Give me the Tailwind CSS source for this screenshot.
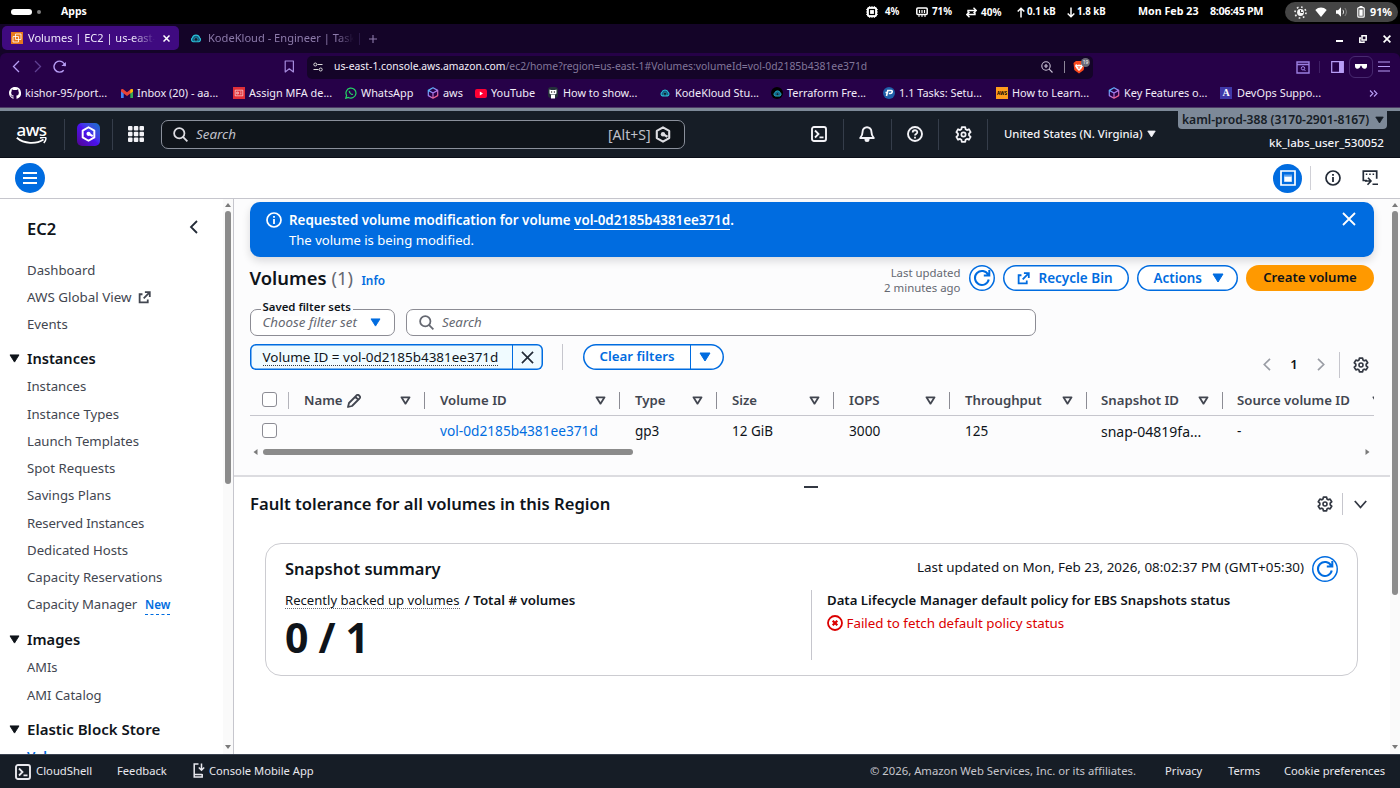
<!DOCTYPE html>
<html lang="en">
<head>
<meta charset="utf-8">
<title>Volumes | EC2 | us-east-1</title>
<script src="https://cdn.jsdelivr.net/npm/@tailwindcss/browser@4"></script>
</head>
<body class="w-[1400px] h-[788px] overflow-hidden flex flex-col font-['Noto_Sans',sans-serif] whitespace-nowrap bg-white text-[#0f141a]">

<svg class="absolute w-0 h-0">
  <symbol id="gear" viewBox="0 0 16 16"><path d="M6.400 1.100h3.200l.4 2 1.200.7 1.900-.7 1.600 2.700-1.500 1.400v1.600l1.500 1.400-1.600 2.700-1.900-.7-1.200.7-.4 2H6.400l-.4-2-1.200-.7-1.900.7-1.600-2.700 1.500-1.400V7.200L1.300 5.800l1.600-2.700 1.900.7 1.200-.7z" fill="none" stroke="currentColor" stroke-width="1.700" stroke-linejoin="round"/><circle cx="8" cy="8" r="2" fill="none" stroke="currentColor" stroke-width="1.600"/></symbol>
  <symbol id="search" viewBox="0 0 16 16"><circle cx="6.700" cy="6.700" r="5.500" fill="none" stroke="currentColor" stroke-width="1.900"/><path d="M10.600 10.600 15.300 15.300" stroke="currentColor" stroke-width="1.900"/></symbol>
  <symbol id="refresh" viewBox="0 0 16 16"><path d="M14 9.300A6.200 6.200 0 1 1 13.400 5M14.500 .8V5.700H9.600" fill="none" stroke="currentColor" stroke-width="1.800"/></symbol>
  <symbol id="ext" viewBox="0 0 16 16"><path d="M5.500 4H2v10h10v-3.500M8.500 1.500h6V7.500M14.500 1.500 7 9" fill="none" stroke="currentColor" stroke-width="2.200"/></symbol>
  <symbol id="info" viewBox="0 0 16 16"><circle cx="8" cy="8" r="7" fill="none" stroke="currentColor" stroke-width="1.700"/><path d="M8 7v5M8 4v1.800" stroke="currentColor" stroke-width="1.800"/></symbol>
  <symbol id="down" viewBox="0 0 12 10"><path d="M1 1h10L6 9z" fill="currentColor" stroke="currentColor" stroke-width="1" stroke-linejoin="round"/></symbol>
  <symbol id="sort" viewBox="0 0 12 10"><path d="M1.500 1.500h9L6 8.500z" fill="none" stroke="currentColor" stroke-width="2" stroke-linejoin="round"/></symbol>
  <symbol id="x" viewBox="0 0 14 14"><path d="M1 1l12 12M13 1 1 13" fill="none" stroke="currentColor" stroke-width="1.800"/></symbol>
  <symbol id="shell" viewBox="0 0 16 16"><rect x="1" y="1" width="14" height="14" rx="2" fill="none" stroke="currentColor" stroke-width="1.900"/><path d="M4 4.500 7.500 8 4 11.500M8.500 11.300h4" fill="none" stroke="currentColor" stroke-width="1.800"/></symbol>
  <symbol id="kk" viewBox="0 0 12 10"><path d="M2.800 8.600A2.500 2.500 0 0 1 2 4.200 4.200 4.200 0 0 1 10 4.200a2.500 2.500 0 0 1-.8 4.400z" fill="#0e5f86" stroke="#2bc4d8" stroke-width="1.300"/><circle cx="6" cy="6" r="2" fill="#10202c" stroke="#2a93b0" stroke-width=".8"/></symbol>
  <symbol id="cube" viewBox="0 0 12 12"><path d="M6 .8 10.700 3.400V8.600L6 11.200 1.300 8.600V3.400zM1.300 3.400 6 6l4.700-2.600M6 6v5" fill="none" stroke="url(#cg)" stroke-width="1.200" stroke-linejoin="round"/></symbol>
  <linearGradient id="cg" gradientUnits="userSpaceOnUse" x1="1" y1="0" x2="10" y2="12"><stop offset="0.100" stop-color="#3cc6f5"/><stop offset=".5" stop-color="#a07cf5"/><stop offset=".9" stop-color="#ff5a7a"/></linearGradient>
  <symbol id="hex" viewBox="0 0 16 17"><path d="M8 1.300 14.200 4.900V12.100L8 15.700 1.800 12.100V4.900z" fill="none" stroke="currentColor" stroke-width="2.100" stroke-linejoin="round"/><circle cx="8" cy="8.300" r="2.200" fill="currentColor"/><path d="M8.500 8.500l4 2.300" stroke="currentColor" stroke-width="2.200"/></symbol>
</svg>

<!-- System bar -->
<div class="h-[24px] shrink-0 bg-black text-white flex items-center text-[10.5px] font-bold">
  <div class="ml-[11px] w-[21px] h-[6px] rounded-full bg-white"></div>
  <div class="ml-[5px] w-[4px] h-[4px] rounded-full bg-[#808080]"></div>
  <div class="ml-[20px] w-[805px] text-[10.500px]">Apps</div>
  <svg class="w-[12px] h-[12px] shrink-0" viewBox="0 0 12 12"><rect x=".8" y=".8" width="10.400" height="10.400" rx="3" fill="#fff"/><path d="M3.500 0v12M6 0v12M8.500 0v12M0 3.500h12M0 6h12M0 8.500h12" stroke="#fff" stroke-width=".7"/><rect x="3.500" y="3.500" width="5" height="5" fill="none" stroke="#000" stroke-width="1.200"/></svg>
  <div class="ml-[7px] w-[31px] text-[9.800px]">4%</div>
  <svg class="w-[12px] h-[10px] shrink-0" viewBox="0 0 12 10"><rect x=".8" y="1" width="10.400" height="6.500" rx="1" fill="none" stroke="#fff" stroke-width="1.500"/><path d="M3.500 3v3M6 3v3M8.500 3v3M2 9h2M5 9h2M8 9h2" stroke="#fff" stroke-width="1.200"/></svg>
  <div class="ml-[4px] w-[34px] text-[9.800px]">71%</div>
  <svg class="w-[11px] h-[11px] shrink-0" viewBox="0 0 11 11"><path d="M2 5.500V3.500h8M7.500.8 10.300 3.500 7.500 6M9 5.500v2H1M3.500 5 .8 7.500 3.500 10.200" fill="none" stroke="#fff" stroke-width="1.400"/></svg>
  <div class="ml-[4px] w-[36px] text-[10px]">40%</div>
  <svg class="w-[8px] h-[11px] shrink-0" viewBox="0 0 8 11"><path d="M4 10.500V1.500M.7 4.500 4 1.200 7.300 4.500" fill="none" stroke="#fff" stroke-width="1.500"/></svg>
  <div class="ml-[2px] w-[40px] text-[9.700px]">0.1 kB</div>
  <svg class="w-[8px] h-[11px] shrink-0" viewBox="0 0 8 11"><path d="M4 .5V9.500M.7 6.500 4 9.800 7.300 6.500" fill="none" stroke="#fff" stroke-width="1.500"/></svg>
  <div class="ml-[2px] w-[61px] text-[9.700px]">1.8 kB</div>
  <div class="w-[72px] text-[10.700px] -mt-px">Mon Feb 23</div>
  <div class="w-[75px] text-[10.800px] tracking-[-0.350px] -mt-px">8:06:45 PM</div>
  <div class="w-[113px] h-[20px] rounded-full bg-[#454545] flex items-center shrink-0">
    <svg class="ml-[9px] w-[13px] h-[13px]" viewBox="0 0 13 13"><circle cx="6.500" cy="6.500" r="5.500" fill="none" stroke="#eee" stroke-width="1.600" stroke-dasharray="1.700 2.600"/><circle cx="6.500" cy="6.500" r="3.400" fill="#f5f5f5"/><path d="M6.500 4v2.500h2.500" stroke="#454545" fill="none"/></svg>
    <svg class="ml-[8px] w-[12px] h-[10px]" viewBox="0 0 12 10"><path d="M6 10 .3 3C3.500-.3 8.500-.3 11.700 3z" fill="#fff"/></svg>
    <svg class="ml-[9px] w-[12px] h-[10px]" viewBox="0 0 12 10"><path d="M0 3.200h2L5 .3v9.400L2 6.800H0z" fill="#fff"/><path d="M6.800 2.800c1 1.300 1 3.100 0 4.400" stroke="#ddd" fill="none"/><path d="M8.800 1c2 2.400 2 5.600 0 8" stroke="#888" fill="none"/></svg>
    <svg class="ml-[9px] w-[8px] h-[12px]" viewBox="0 0 8 12"><path d="M2.500 0h3v2h-3z" fill="#fff"/><rect x=".8" y="1.600" width="6.400" height="9.600" rx="1" fill="none" stroke="#fff" stroke-width="1.200"/><path d="M2.300 3.500h3.400v6.300H2.300z" fill="#fff"/></svg>
    <div class="ml-[5px] text-[10.800px]">91%</div>
  </div>
</div>

<!-- Tab strip -->
<div class="h-[29px] shrink-0 bg-[#140428] flex items-center text-[11.700px]">
  <div class="ml-[2px] mr-[11px] -mt-[1px] w-[177px] h-[24px] rounded-[5px] bg-[#3f0a80] flex items-center text-[#eee8fa]">
    <svg class="ml-[9px] w-[12px] h-[12px] shrink-0" viewBox="0 0 12 12"><path d="M0 0h12v12H0z" fill="#e8791c"/><path d="M4.500 2h5.500v5.500H4.500zM7.500 4.500V10H2V4.500z" fill="none" stroke="#fff" stroke-width=".8"/></svg>
    <div class="ml-[5px] w-[127px] text-[11px] mask-r-from-82% mask-r-to-100%">Volumes | EC2 | us-east-</div>
    <svg class="ml-[8px] w-[7px] h-[7px]" viewBox="0 0 14 14"><path d="M1 1l12 12M13 1 1 13" stroke="#fff" stroke-width="3"/></svg>
  </div>
  <svg class="w-[12px] h-[9px]"><use href="#kk"/></svg>
  <div class="ml-[6px] w-[146px] text-[#8d7bab] text-[11.100px] mask-r-from-88% mask-r-to-100%">KodeKloud - Engineer | Task</div>
  <div class="ml-[5px] w-px h-[12px] bg-[#2a1846]"></div>
  <svg class="ml-[9px] w-[8px] h-[8px]" viewBox="0 0 8 8"><path d="M4 0v8M0 4h8" stroke="#8d7bab" stroke-width="1.100"/></svg>
  <div class="grow"></div>
  <div class="w-[7px] h-[2px] bg-white mt-[5px] mr-[16px]"></div>
  <svg class="w-[8px] h-[8px] mr-[16px]" viewBox="0 0 8 8"><path d="M3 .8h4.200V5H3z" fill="none" stroke="#fff" stroke-width="1.500"/><path d="M2 3H.8v4.200H5V6.200" fill="none" stroke="#fff" stroke-width="1.500"/></svg>
  <svg class="w-[8px] h-[8px] mr-[9px]" viewBox="0 0 14 14"><path d="M1 1l12 12M13 1 1 13" stroke="#fff" stroke-width="3"/></svg>
</div>

<!-- Toolbar -->
<div class="h-[27px] shrink-0 bg-[#140428]"><div class="h-full rounded-t-[6px] bg-[#260148] flex items-center text-[#b79df5]">
  <svg class="ml-[12px] w-[8px] h-[13px]" viewBox="0 0 8 13"><path d="M7 1 1.500 6.500 7 12" fill="none" stroke="currentColor" stroke-width="1.300"/></svg>
  <svg class="ml-[14px] w-[8px] h-[13px] text-[#5f4192]" viewBox="0 0 8 13"><path d="M1 1 6.500 6.500 1 12" fill="none" stroke="currentColor" stroke-width="1.300"/></svg>
  <svg class="ml-[11px] w-[13px] h-[13px]" viewBox="0 0 13 13"><path d="M10.700 10.200A5.500 5.500 0 1 1 12 6.200" fill="none" stroke="currentColor" stroke-width="1.400"/><path d="M8.400 6h4.500V2z" fill="currentColor"/></svg>
  <svg class="ml-[218px] w-[11px] h-[13px]" viewBox="0 0 11 13"><path d="M1.200 1h8.200v11L5.300 8.800 1.200 12z" fill="none" stroke="#a58bdc" stroke-width="1.200" stroke-linejoin="round"/></svg>
  <div class="ml-[12px] w-[786px] h-[23px] mt-[1px] rounded-[5px] bg-[#140428] flex items-center shrink-0">
    <svg class="ml-[6px] w-[10px] h-[10px]" viewBox="0 0 10 10"><path d="M4.500 2.500H9.500M.5 7.500h5" stroke="#ddd" stroke-width="1.200"/><circle cx="2.300" cy="2.500" r="1.500" fill="none" stroke="#ddd"/><circle cx="7.700" cy="7.500" r="1.500" fill="none" stroke="#ddd"/></svg>
    <div class="ml-[11px] w-[707px] text-[10.360px] text-[#82779a]"><span class="text-[#f4f0fa]">us-east-1.console.aws.amazon.com</span>/ec2/home?region=us-east-1#Volumes:volumeId=vol-0d2185b4381ee371d</div>
    <svg class="w-[12px] h-[12px]" viewBox="0 0 12 12"><circle cx="5" cy="5" r="4.200" fill="none" stroke="#c8c0d4" stroke-width="1.100"/><path d="M8.200 8.200 11.500 11.500M3 5h4M5 3v4" stroke="#c8c0d4" stroke-width="1.200"/></svg>
    <div class="ml-[11px] w-px h-[12px] bg-[#8d8698]"></div>
    <div class="relative ml-[8px]">
      <svg class="w-[12px] h-[14px]" viewBox="0 0 12 14"><path d="M3 1h6l2.500 2-.8 7L6 13.500 1.300 10 .5 3z" fill="#fb4a1e"/><path d="M3 4l1.500 1L6 4.500 7.500 5 9 4l1 2-1.500 2.500L6 11 3.500 8.500 2 6z" fill="#fff"/><path d="M6 6v3M4.500 6.500l1 .5M7.500 6.500l-1 .5" stroke="#fb4a1e" stroke-width=".8"/></svg>
      <div class="absolute left-[8px] -top-[2px] w-[9px] h-[9px] rounded-full bg-[#6b6b78] text-white text-[5px] leading-[9px] text-center">19</div>
    </div>
  </div>
  <svg class="ml-[203px] w-[14px] h-[13px] mt-px" viewBox="0 0 14 13"><path d="M1 1h12v11H1zM1 3.500h12" fill="none" stroke="#9b7fe0" stroke-width="1.400"/><circle cx="7" cy="7.300" r="1.700" fill="none" stroke="#9b7fe0"/><path d="M8 8.500 9.500 10" stroke="#9b7fe0"/></svg>
  <div class="ml-[9px] w-px h-[12px] bg-[#3f2065]"></div>
  <svg class="ml-[11px] w-[13px] h-[12px]" viewBox="0 0 13 12"><path d="M.7.7h11.600v10.600H.7z" fill="none" stroke="#b79df5" stroke-width="1.200"/><path d="M8 1h4.500v10H8z" fill="#b79df5"/></svg>
  <div class="ml-[5px] w-[24px] h-[22px] rounded-[6px] border border-[#47296f] flex items-center justify-center"><svg class="w-[12px] h-[5px]" viewBox="0 0 12 5"><path d="M0 0h12v2.200C12 4 10.500 4.800 9.300 4.800S7 4 6.500 1.800h-1C5 4 3.900 4.800 2.700 4.800S0 4 0 2.200z" fill="#fff"/></svg></div>
  <svg class="ml-[5px] w-[12px] h-[11px]" viewBox="0 0 12 11"><path d="M0 1h12M0 5.500h12M0 10h12" stroke="#b79df5" stroke-width="1.200"/></svg>
</div></div>

<!-- Bookmarks -->
<div class="h-[27px] shrink-0 bg-[#260148] text-[#f1ecf8] text-[10.900px] flex items-center pl-[9px]">
  <div class="w-[112px] flex items-center gap-[4px]"><svg class="w-[12px] h-[12px]" viewBox="0 0 16 16"><path fill="#fff" d="M8 0C3.580 0 0 3.580 0 8c0 3.540 2.290 6.530 5.470 7.590.4.070.55-.17.55-.38v-1.490c-2.010.37-2.530-.49-2.690-.94-.09-.23-.48-.94-.82-1.130-.28-.15-.68-.52-.01-.53.63-.01 1.080.58 1.230.82.72 1.210 1.870.87 2.330.66.07-.52.28-.87.51-1.070-1.780-.2-3.640-.89-3.640-3.950 0-.87.31-1.590.82-2.150-.08-.2-.36-1.020.08-2.120 0 0 .67-.21 2.200.82a7.400 7.400 0 0 1 4 0c1.530-1.040 2.200-.82 2.200-.82.44 1.100.16 1.920.08 2.120.51.56.82 1.270.82 2.150 0 3.070-1.870 3.750-3.650 3.950.29.25.54.73.54 1.480v2.200c0 .21.15.46.55.38A8 8 0 0 0 8 0z"/></svg>kishor-95/port...</div>
  <div class="w-[112px] flex items-center gap-[4px]"><svg class="w-[12px] h-[9px]" viewBox="0 0 12 9"><path d="M0 1v8h2.700V3.500z" fill="#4285f4"/><path d="M12 1v8H9.300V3.500z" fill="#34a853"/><path d="M0 1.500C0 0 1.500-.3 2.500.5L6 3.300 9.500.5C10.500-.3 12 0 12 1.500v1L6 7 0 2.500z" fill="#ea4335"/><path d="M12 1.500C12 0 10.500-.3 9.300.7V4.500L12 2.500z" fill="#fbbc04"/></svg>Inbox (20) - aa...</div>
  <div class="w-[112px] flex items-center gap-[4px]"><svg class="w-[12px] h-[12px]" viewBox="0 0 12 12"><path d="M0 0h12v12H0z" fill="#e02f38"/><path d="M2.200 3.200h7.600v5.600H2.200zM3.800 5h1.500v2H3.800zM7 5h1.500M7 6.800h1.500" fill="none" stroke="#fff" stroke-width=".6"/></svg>Assign MFA de...</div>
  <div class="w-[82px] flex items-center gap-[4px]"><svg class="w-[12px] h-[12px]" viewBox="0 0 12 12"><path d="M.8 11.200 1.600 8.500A5 5 0 1 1 3.500 10.400z" fill="none" stroke="#25d366" stroke-width="1.200"/><path d="M4 3.500c-.8.800 0 2.200 1 3.200s2.500 1.700 3.200 1l-1-1.200-.8.300L5.300 5.700l.3-.8z" fill="#25d366"/></svg>WhatsApp</div>
  <div class="w-[48px] flex items-center gap-[4px]"><svg class="w-[12px] h-[12px]"><use href="#cube"/></svg>aws</div>
  <div class="w-[72px] flex items-center gap-[4px]"><svg class="w-[12px] h-[9px]" viewBox="0 0 12 9"><rect width="12" height="9" rx="2" fill="#ff0033"/><path d="M4.800 2.500v4L8 4.500z" fill="#fff"/></svg>YouTube</div>
  <div class="w-[112px] flex items-center gap-[4px]"><svg class="w-[12px] h-[12px]" viewBox="0 0 12 12"><rect x="1" y="0" width="10" height="11" rx="3" fill="#24303a"/><path d="M2.500 2.500 4 3h4l1.500-.5v4L8 7.500H4L2.500 6.500z" fill="#fff"/><path d="M4 8h4v3.500H4z" fill="#fff"/><circle cx="4.600" cy="5" r=".7" fill="#222"/><circle cx="7.400" cy="5" r=".7" fill="#222"/></svg>How to show...</div>
  <div class="w-[112px] flex items-center gap-[4px]"><svg class="w-[12px] h-[8px]"><use href="#kk"/></svg>KodeKloud Stu...</div>
  <div class="w-[112px] flex items-center gap-[4px]"><div class="w-[12px] h-[12px] rounded-full bg-black flex items-center justify-center"><svg class="w-[9px] h-[7px]"><use href="#kk"/></svg></div>Terraform Fre...</div>
  <div class="w-[113px] flex items-center gap-[4px]"><svg class="w-[12px] h-[12px]" viewBox="0 0 12 12"><circle cx="6" cy="6" r="6" fill="#1e5fa8"/><path d="M3.500 9 4.800 3.500h3.500c1.500 0 1.200 3-1 3H5.800M2.500 5.500h2" fill="none" stroke="#fff" stroke-width="1.600"/></svg>1.1 Tasks: Setu...</div>
  <div class="w-[112px] flex items-center gap-[4px]"><div class="w-[12px] h-[12px] bg-[#ff9d1c] text-black text-[4.500px] font-bold leading-[12px] text-center">AWS</div>How to Learn...</div>
  <div class="w-[112px] flex items-center gap-[4px]"><svg class="w-[12px] h-[12px]"><use href="#cube"/></svg>Key Features o...</div>
  <div class="w-[149px] flex items-center gap-[5px]"><div class="w-[12px] h-[12px] bg-[#4038a8] text-white text-[10px] font-['Liberation_Serif',serif] font-bold leading-[12px] text-center">A</div>DevOps Suppo...</div>
  <svg class="w-[9px] h-[7px]" viewBox="0 0 9 7"><path d="M1 .5l3 3-3 3M5 .5l3 3-3 3" fill="none" stroke="#b79df5" stroke-width="1.100"/></svg>
</div>

<!-- AWS navigation -->
<div class="h-[4px] shrink-0 bg-[#7d8998] border-t border-[#4c3a66]"></div>
<div class="h-[47px] shrink-0 bg-[#161d26] border-b border-[#0b0f18] text-[#f3f3f7] flex items-center">
  <div class="ml-[16px] w-[31px] h-[22px] relative -mt-px">
    <div class="text-[17px] leading-[14px] font-medium tracking-[-0.600px] text-white text-center">aws</div>
    <svg class="absolute left-0 top-[14px] w-[31px] h-[8px]" viewBox="0 0 31 8"><path d="M.8.8C8 7 20 7.500 27.500 2.500" fill="none" stroke="#fff" stroke-width="1.800"/><path d="M24 .9c3-.7 5.500-.7 5.800 0s-.6 3.300-2 5" fill="none" stroke="#fff" stroke-width="1.500"/></svg>
  </div>
  <div class="ml-[17px] w-px h-[31px] bg-[#353d4a]"></div>
  <div class="ml-[12px] w-[23px] h-[23px] rounded-[5px] bg-linear-to-tr from-[#52008f] via-[#4a10f0] to-[#0a70c8] flex items-center justify-center"><svg class="w-[15px] h-[16px] text-white"><use href="#hex"/></svg></div>
  <div class="ml-[12px] w-px h-[31px] bg-[#353d4a]"></div>
  <svg class="ml-[15px] w-[16px] h-[16px]" viewBox="0 0 16 16"><g fill="#f3f3f7"><rect x="0" y="0" width="4.500" height="4.500" rx="1"/><rect x="5.800" y="0" width="4.500" height="4.500" rx="1"/><rect x="11.500" y="0" width="4.500" height="4.500" rx="1"/><rect x="0" y="5.800" width="4.500" height="4.500" rx="1"/><rect x="5.800" y="5.800" width="4.500" height="4.500" rx="1"/><rect x="11.500" y="5.800" width="4.500" height="4.500" rx="1"/><rect x="0" y="11.500" width="4.500" height="4.500" rx="1"/><rect x="5.800" y="11.500" width="4.500" height="4.500" rx="1"/><rect x="11.500" y="11.500" width="4.500" height="4.500" rx="1"/></g></svg>
  <div class="ml-[17px] w-[524px] h-[29px] rounded-[7px] border border-[#8a909b] bg-[#0f141a] flex items-center text-[#c0c0ca] text-[13.400px]">
    <svg class="ml-[11px] w-[15px] h-[15px] text-[#dedee3]"><use href="#search"/></svg>
    <div class="ml-[8px] w-[412px] italic">Search</div>
    <div class="w-[47px] text-[14px]">[Alt+S]</div>
    <svg class="w-[16px] h-[17px] text-[#dedee3]"><use href="#hex"/></svg>
  </div>
  <svg class="ml-[126px] w-[16px] h-[16px]"><use href="#shell"/></svg>
  <div class="ml-[16px] w-px h-[31px] bg-[#353d4a]"></div>
  <svg class="ml-[15px] w-[16px] h-[16px]" viewBox="0 0 16 16"><path d="M8 1.200a4.400 4.400 0 0 1 4.400 4.500c0 3.300 1 4.600 2.400 6.300H1.200c1.400-1.700 2.400-3 2.400-6.300A4.400 4.400 0 0 1 8 1.200z" fill="none" stroke="currentColor" stroke-width="1.900" stroke-linejoin="round"/><path d="M5.500 12.500h5v1a2.500 2.500 0 0 1-5 0z" fill="currentColor"/></svg>
  <div class="ml-[16px] w-px h-[31px] bg-[#353d4a]"></div>
  <svg class="ml-[15px] w-[16px] h-[16px]" viewBox="0 0 16 16"><circle cx="8" cy="8" r="7" fill="none" stroke="currentColor" stroke-width="1.900"/><path d="M5.700 6.500c0-3 4.600-2.900 4.600-.2C10.300 8 8 8 8 9.500M8 10.800v1.600" fill="none" stroke="currentColor" stroke-width="1.800"/></svg>
  <div class="ml-[15px] w-px h-[31px] bg-[#353d4a]"></div>
  <svg class="ml-[16px] w-[17px] h-[17px]"><use href="#gear"/></svg>
  <div class="ml-[15px] w-px h-[31px] bg-[#353d4a]"></div>
  <div class="ml-[16px] w-[143px] text-[11.300px] font-medium">United States (N. Virginia)</div>
  <svg class="w-[9px] h-[8px]"><use href="#down"/></svg>
  <div class="ml-[22px] w-[209px] h-full flex flex-col">
    <div class="h-[18px] rounded-b-[4px] bg-[#7d8998] text-[#161d26] text-[12.100px] font-semibold flex items-center pl-[4px]"><span class="w-[193px] mt-px">kaml-prod-388 (3170-2901-8167)</span><svg class="w-[9px] h-[8px]"><use href="#down"/></svg></div>
    <div class="mt-[4px] pr-[3px] text-right text-[11.600px] leading-[20px] font-medium">kk_labs_user_530052</div>
  </div>
</div>

<!-- Page toolbar -->
<div class="h-[41px] shrink-0 border-b border-[#c6c6cd] flex items-center text-[#232b37]">
  <div class="ml-[15px] w-[30px] h-[30px] rounded-full bg-[#006ce0] flex items-center justify-center"><svg class="w-[14px] h-[12px]" viewBox="0 0 14 12"><path d="M0 1h14M0 6h14M0 11h14" stroke="#fff" stroke-width="1.900"/></svg></div>
  <div class="grow"></div>
  <div class="w-[29px] h-[29px] rounded-full bg-[#006ce0] flex items-center justify-center"><svg class="w-[16px] h-[16px]" viewBox="0 0 16 16"><path d="M1 1h14v14H1z" fill="none" stroke="#fff" stroke-width="1.700"/><path d="M4 4h8v8H4z" fill="#8dbdf2"/><path d="M4.500 7h7v4.500h-7z" fill="#fff"/><path d="M4 4h8v1.500H4z" fill="#2f86e6"/></svg></div>
  <div class="ml-[8px] w-px h-[24px] bg-[#d0d0d6]"></div>
  <svg class="ml-[14px] w-[16px] h-[16px]"><use href="#info"/></svg>
  <svg class="ml-[21px] mr-[22px] w-[16px] h-[16px]" viewBox="0 0 16 16"><path d="M5 10.500H1.300V1.200h13.400v7.500" fill="none" stroke="currentColor" stroke-width="1.700"/><path d="M3.800 4.200h1.500M7.200 4.200h1.500M10.600 4.200h1.500M10.500 14.300H16" stroke="currentColor" stroke-width="1.600"/><path d="M3 11h5.500M6 7.800 9 11l-3.500 3.800" fill="none" stroke="currentColor" stroke-width="1.600"/></svg>
</div>

<div class="h-[555px] shrink-0 flex">
  <!-- Sidebar -->
  <nav class="w-[223px] h-full overflow-hidden shrink-0 text-[13.200px] text-[#424650] leading-[27.250px]">
    <div class="h-[57.500px] pt-[16px] pl-[27px] pr-[25px] flex items-center justify-between text-[#0f141a]"><span class="text-[16.500px] font-semibold mt-[-14px]">EC2</span><svg class="w-[9px] h-[14px] mt-[-17px]" viewBox="0 0 9 14"><path d="M8 1 2 7l6 6" fill="none" stroke="#232b37" stroke-width="1.800"/></svg></div>
    <div class="pl-[27px]">
      <div>Dashboard</div>
      <div class="flex items-center gap-[6px] text-[13.400px]">AWS Global View <svg class="w-[13px] h-[13px]"><use href="#ext"/></svg></div>
      <div>Events</div>
    </div>
    <div class="mt-[7px] h-[27px] pl-[9px] flex items-center text-[#0f141a] font-semibold text-[14.600px]"><svg class="w-[11px] h-[9px] mr-[7px]"><use href="#down"/></svg>Instances</div>
    <div class="pl-[27px] pt-[1px]">
      <div>Instances</div>
      <div>Instance Types</div>
      <div>Launch Templates</div>
      <div>Spot Requests</div>
      <div>Savings Plans</div>
      <div class="tracking-[-0.150px]">Reserved Instances</div>
      <div>Dedicated Hosts</div>
      <div>Capacity Reservations</div>
      <div class="flex"><span class="w-[118px] tracking-[-0.100px]">Capacity Manager</span><span class="my-[4px] leading-[19px] font-semibold text-[11.600px] text-[#006ce0] border-b border-dashed border-[#006ce0]">New</span></div>
    </div>
    <div class="mt-[7px] h-[27px] pl-[9px] flex items-center text-[#0f141a] font-semibold text-[14.700px]"><svg class="w-[11px] h-[9px] mr-[7px]"><use href="#down"/></svg>Images</div>
    <div class="pl-[27px] pt-[1px]">
      <div class="text-[12.900px]">AMIs</div>
      <div class="text-[13px]">AMI Catalog</div>
    </div>
    <div class="mt-[7px] h-[27px] pl-[9px] flex items-center text-[#0f141a] font-semibold text-[15.050px]"><svg class="w-[11px] h-[9px] mr-[7px]"><use href="#down"/></svg>Elastic Block Store</div>
    <div class="pl-[27px] text-[#006ce0] font-semibold">Volumes</div>
  </nav>
  <div class="w-[11px] h-full shrink-0 bg-[#fafafa] border-r border-[#c6c6cd] flex flex-col items-center">
    <svg class="mt-[4px] w-[6px] h-[4px] shrink-0" viewBox="0 0 6 4"><path d="M0 4h6L3 0z" fill="#7a7a7a"/></svg>
    <div class="mt-[4px] w-[6px] h-[273px] shrink-0 rounded-full bg-[#8b8b8b]"></div>
    <svg class="mt-auto mb-[5px] w-[6px] h-[4px] shrink-0" viewBox="0 0 6 4"><path d="M0 0h6L3 4z" fill="#7a7a7a"/></svg>
  </div>

  <!-- Content -->
  <main class="w-[1156px] h-full shrink-0 flex flex-col bg-[#fcfcfd]">
    <div class="h-[276px] shrink-0 pl-[15.500px] pr-[16px] pt-[3px] flex flex-col">
      <div class="w-[1124.500px] h-[55px] shrink-0 rounded-[10px] bg-[#006ce0] shadow-[0_4px_8px_rgba(0,7,22,0.140)] text-white flex pt-[8px] text-[13.200px] leading-[20px]">
        <svg class="ml-[16px] mt-[2px] w-[16px] h-[16px] shrink-0"><use href="#info"/></svg>
        <div class="ml-[7.500px] grow"><div class="font-semibold text-[13.370px]">Requested volume modification for volume <span class="border-b border-white">vol-0d2185b4381ee371d</span>.</div><div class="text-[13.100px]">The volume is being modified.</div></div>
        <svg class="mr-[18px] mt-[2px] w-[14px] h-[14px] shrink-0"><use href="#x"/></svg>
      </div>

      <div class="h-[42px] shrink-0 flex items-center">
        <div class="text-[18.400px] font-semibold w-[82px]">Volumes</div>
        <div class="text-[18.300px] text-[#656871] w-[30px]">(1)</div>
        <div class="text-[11.800px] font-semibold text-[#006ce0] mt-[5px]">Info</div>
        <div class="grow text-right mr-[8px] text-[11.400px] leading-[15px] text-[#656871] mt-[3px]">Last updated<br>2 minutes ago</div>
        <div class="w-[26px] h-[26px] rounded-full shadow-[inset_0_0_0_1.500px_#006ce0] bg-white text-[#006ce0] flex items-center justify-center"><svg class="w-[18px] h-[18px]"><use href="#refresh"/></svg></div>
        <div class="ml-[8.500px] w-[126px] h-[26px] rounded-full shadow-[inset_0_0_0_1.500px_#006ce0] bg-white text-[#006ce0] font-semibold text-[13.500px] flex items-center"><svg class="ml-[14px] mr-[8.500px] w-[13px] h-[13px]"><use href="#ext"/></svg>Recycle Bin</div>
        <div class="ml-[8px] w-[101px] h-[26px] rounded-full shadow-[inset_0_0_0_1.500px_#006ce0] bg-white text-[#006ce0] font-semibold text-[13.400px] flex items-center"><span class="ml-[16.500px] w-[58px]">Actions</span><svg class="w-[12px] h-[10px]"><use href="#down"/></svg></div>
        <div class="ml-[8px] w-[128px] h-[26px] rounded-full bg-[#ff9900] font-semibold text-[13.200px] flex items-center justify-center">Create volume</div>
      </div>

      <div class="mt-[10px] h-[27px] shrink-0 flex items-center">
        <div class="relative w-[145px] h-[27px] rounded-[7px] border border-[#8c8c94] bg-white flex items-center text-[13.350px] text-[#656871]">
          <div class="absolute left-[10px] -top-[12px] px-[2px] h-[18px] leading-[18px] bg-[#fcfcfd] text-[#0f141a] text-[11.400px] font-semibold">Saved filter sets</div>
          <span class="ml-[12px] w-[107px] italic z-10">Choose filter set</span><svg class="w-[11px] h-[9px] text-[#006ce0]"><use href="#down"/></svg>
        </div>
        <div class="ml-[11.500px] w-[630px] h-[27px] rounded-[7px] border border-[#8c8c94] bg-white flex items-center text-[13.300px] text-[#656871]"><svg class="ml-[12px] mr-[8px] w-[15px] h-[15px]"><use href="#search"/></svg><span class="italic">Search</span></div>
      </div>

      <div class="mt-[8px] h-[27px] shrink-0 flex items-start">
        <div class="w-[293px] h-[26px] rounded-[6px] shadow-[inset_0_0_0_1.500px_#006ce0] bg-[#f0fbff] flex items-center text-[13.470px] overflow-hidden">
          <div class="ml-[13px] w-[238px]"><span class="border-b-[1.500px] border-dotted border-[#333843] leading-[16px] pt-[2px] inline-block">Volume ID = vol-0d2185b4381ee371d</span></div>
          <div class="ml-[11px] w-px h-full bg-[#006ce0]"></div>
          <svg class="ml-[8px] w-[13px] h-[13px] text-[#232b37]"><use href="#x"/></svg>
        </div>
        <div class="ml-[19px] w-px h-[26px] bg-[#c6c6cd]"></div>
        <div class="ml-[20px] w-[141px] h-[26px] rounded-full shadow-[inset_0_0_0_1.500px_#006ce0] bg-white text-[#006ce0] flex items-center font-semibold text-[13.300px]">
          <span class="ml-[17px] w-[90px]">Clear filters</span><div class="w-px h-full bg-[#006ce0]"></div><svg class="ml-[8px] w-[12px] h-[10px]"><use href="#down"/></svg>
        </div>
        <div class="grow"></div>
        <div class="h-[26px] mt-[7.500px] flex items-center text-[#9a9da5]">
          <svg class="w-[8px] h-[13px]" viewBox="0 0 8 13"><path d="M7 .8 1.300 6.500 7 12.200" fill="none" stroke="currentColor" stroke-width="1.700"/></svg>
          <span class="w-[46px] text-center text-[13px] font-semibold text-[#0f141a]">1</span>
          <svg class="w-[8px] h-[13px]" viewBox="0 0 8 13"><path d="M1 .8 6.700 6.500 1 12.200" fill="none" stroke="currentColor" stroke-width="1.700"/></svg>
          <div class="ml-[14px] w-px h-[26px] bg-[#c6c6cd]"></div>
          <svg class="ml-[12.500px] mr-[5.500px] w-[16px] h-[16px] text-[#333843]"><use href="#gear"/></svg>
        </div>
      </div>

      <!-- Table -->
      <div class="mt-[15px] w-[1124.500px] overflow-hidden text-[13.200px] shrink-0">
        <div class="h-[30px] border-b border-[#c6c6cd] flex items-center font-semibold text-[#424650]">
          <div class="w-[39px] shrink-0 flex items-center justify-between border-r border-[#b4b4bb] h-[17px] pl-[12.500px]"><div class="w-[15px] h-[15px] -mt-[2px] rounded-[3px] border border-[#8c8c94] bg-white"></div></div>
          <div class="w-[136px] shrink-0 h-[17px] pl-[15.500px] pr-[13px] flex items-center border-r-[1.500px] border-[#8c8c94]">Name<svg class="ml-[4px] w-[14px] h-[14px]" viewBox="0 0 14 14"><path d="M1 13l1-4L9.500 1.500a1.500 1.500 0 0 1 2.500 0l.5.5a1.500 1.500 0 0 1 0 2.500L5 12zM8.500 3l2.700 2.700" fill="none" stroke="currentColor" stroke-width="1.800" stroke-linejoin="round"/></svg><svg class="ml-auto w-[11px] h-[9px]"><use href="#sort"/></svg></div>
          <div class="w-[195px] shrink-0 h-[17px] pl-[15.500px] pr-[13px] flex items-center justify-between border-r-[1.500px] border-[#8c8c94]">Volume ID<svg class="w-[11px] h-[9px]"><use href="#sort"/></svg></div>
          <div class="w-[97px] shrink-0 h-[17px] pl-[15.500px] pr-[13px] flex items-center justify-between border-r-[1.500px] border-[#8c8c94]">Type<svg class="w-[11px] h-[9px]"><use href="#sort"/></svg></div>
          <div class="w-[117px] shrink-0 h-[17px] pl-[15.500px] pr-[13px] flex items-center justify-between border-r-[1.500px] border-[#8c8c94]">Size<svg class="w-[11px] h-[9px]"><use href="#sort"/></svg></div>
          <div class="w-[116px] shrink-0 h-[17px] pl-[15.500px] pr-[13px] flex items-center justify-between border-r-[1.500px] border-[#8c8c94]">IOPS<svg class="w-[11px] h-[9px]"><use href="#sort"/></svg></div>
          <div class="w-[137px] shrink-0 h-[17px] pl-[15.500px] pr-[13px] flex items-center justify-between border-r-[1.500px] border-[#8c8c94]">Throughput<svg class="w-[11px] h-[9px]"><use href="#sort"/></svg></div>
          <div class="w-[136px] shrink-0 h-[17px] pl-[14.500px] pr-[13px] flex items-center justify-between border-r-[1.500px] border-[#8c8c94]">Snapshot ID<svg class="w-[11px] h-[9px]"><use href="#sort"/></svg></div>
          <div class="w-[160px] shrink-0 h-[17px] pl-[14.500px] flex items-center">Source volume ID<svg class="ml-auto w-[11px] h-[9px]"><use href="#sort"/></svg></div>
        </div>
        <div class="h-[31px] flex items-center text-[13.500px]">
          <div class="w-[39px] shrink-0 pl-[12.500px]"><div class="w-[15px] h-[15px] -mt-[2px] rounded-[3px] border border-[#8c8c94] bg-white"></div></div>
          <div class="w-[136px] shrink-0"></div>
          <div class="w-[195px] shrink-0 pl-[15.500px] text-[#006ce0] text-[13.700px]">vol-0d2185b4381ee371d</div>
          <div class="w-[97px] shrink-0 pl-[15.500px]">gp3</div>
          <div class="w-[117px] shrink-0 pl-[15.500px]">12 GiB</div>
          <div class="w-[116px] shrink-0 pl-[15.500px] text-[13.700px]">3000</div>
          <div class="w-[137px] shrink-0 pl-[15.500px]">125</div>
          <div class="w-[136px] shrink-0 pl-[14.500px] text-[14px]">snap-04819fa...</div>
          <div class="w-[160px] shrink-0 pl-[14.500px]">-</div>
        </div>
      </div>
      <div class="mt-[1px] h-[8px] flex items-center shrink-0">
        <svg class="ml-[3px] w-[5px] h-[6px]" viewBox="0 0 5 6"><path d="M4.500 0v6L.5 3z" fill="#7a7a7a"/></svg>
        <div class="ml-[5.500px] w-[370px] h-[6px] rounded-full bg-[#8b8b8b]"></div>
        <svg class="ml-auto mr-[4px] w-[5px] h-[6px]" viewBox="0 0 5 6"><path d="M.5 0v6l4-3z" fill="#7a7a7a"/></svg>
      </div>
    </div>

    <!-- Split panel -->
    <section class="h-[279px] border-t-2 border-[#dcdce0] bg-white pl-[16px] pr-[32px] flex flex-col">
      <div class="mt-[8.500px] mx-auto w-[14px] h-[2px] shrink-0 bg-[#333843] translate-x-[7px]"></div>
      <div class="mt-[4.500px] -mr-[10px] h-[24px] shrink-0 flex items-center text-[#333843]">
        <div class="grow text-[16.600px] font-semibold text-[#0f141a] mt-px">Fault tolerance for all volumes in this Region</div>
        <svg class="w-[16px] h-[16px]"><use href="#gear"/></svg>
        <div class="ml-[9px] w-px h-[22px] bg-[#c6c6cd]"></div>
        <svg class="ml-[11px] mr-px w-[13px] h-[9px]" viewBox="0 0 13 9"><path d="M.8 1 6.500 7.500 12.200 1" fill="none" stroke="currentColor" stroke-width="1.800"/></svg>
      </div>
      <div class="mt-[27px] ml-[15px] w-[1093px] h-[133px] shrink-0 rounded-[16px] border border-[#ccccd1] px-[19px] pt-[11px]">
        <div class="h-[28px] flex items-center">
          <div class="grow text-[16.500px] font-semibold">Snapshot summary</div>
          <div class="text-[13.400px] mt-[-3px]">Last updated on Mon, Feb 23, 2026, 08:02:37 PM (GMT+05:30)</div>
          <div class="ml-[8px] w-[26px] h-[26px] rounded-full shadow-[inset_0_0_0_1.500px_#006ce0] text-[#006ce0] flex items-center justify-center"><svg class="w-[18px] h-[18px]"><use href="#refresh"/></svg></div>
        </div>
        <div class="flex mt-[7px]">
          <div class="w-[526px]">
            <div class="h-[20px] leading-[18px] text-[13.100px] font-semibold"><span class="font-normal border-b-[1.500px] border-dotted border-[#656871] inline-block leading-[16px] pt-[2px] mr-[5px]">Recently backed up volumes</span><span class="text-[13.300px]">/ Total # volumes</span></div>
            <div class="text-[41px] leading-[54px] font-bold tracking-[-0.300px]">0 / 1</div>
          </div>
          <div class="w-px h-[70px] bg-[#c6c6cd]"></div>
          <div class="ml-[15px]">
            <div class="h-[20px] leading-[20px] text-[13.200px] font-semibold">Data Lifecycle Manager default policy for EBS Snapshots status</div>
            <div class="mt-[3px] h-[20px] flex items-center gap-[3.500px] text-[#db0000] text-[13.350px]"><svg class="w-[16px] h-[16px]" viewBox="0 0 16 16"><circle cx="8" cy="8" r="7" fill="none" stroke="currentColor" stroke-width="1.800"/><path d="M5.700 5.700l4.600 4.600M10.300 5.700l-4.600 4.600" stroke="currentColor" stroke-width="2.200"/></svg>Failed to fetch default policy status</div>
          </div>
        </div>
      </div>
    </section>
  </main>
  <div class="w-[10px] h-full shrink-0 bg-[#fafafa] flex flex-col items-center">
    <svg class="ml-[-1px] mt-[4px] w-[6px] h-[4px] shrink-0" viewBox="0 0 6 4"><path d="M0 4h6L3 0z" fill="#7a7a7a"/></svg>
    <div class="ml-[-1px] mt-[4px] w-[6px] h-[384px] shrink-0 rounded-full bg-[#8b8b8b]"></div>
    <svg class="ml-[-1px] mt-auto mb-[5px] w-[6px] h-[4px] shrink-0" viewBox="0 0 6 4"><path d="M0 0h6L3 4z" fill="#7a7a7a"/></svg>
  </div>
</div>

<!-- Footer -->
<footer class="h-[34px] shrink-0 bg-[#161d26] border-t border-[#3a4250] text-[#e8e8ee] text-[11.200px] flex items-center">
  <svg class="ml-[15px] w-[16px] h-[16px]"><use href="#shell"/></svg>
  <div class="ml-[5px] w-[81px] text-[11.300px]">CloudShell</div>
  <div class="w-[76px]">Feedback</div>
  <svg class="w-[12px] h-[15px] -mt-[2px]" viewBox="0 0 12 15"><path d="M5.500 1H1.200v13h8v-3M1.200 11.500h8" fill="none" stroke="currentColor" stroke-width="1.500"/><path d="M8.500.5V7M5.800 4.500l2.700 2.700 2.700-2.700" fill="none" stroke="currentColor" stroke-width="1.500"/></svg>
  <div class="ml-[4px] grow text-[11.200px]">Console Mobile App</div>
  <div class="w-[295px] text-[#c6c6cd] text-[11.300px]">© 2026, Amazon Web Services, Inc. or its affiliates.</div>
  <div class="w-[63px]">Privacy</div>
  <div class="w-[56px]">Terms</div>
  <div class="w-[116px]">Cookie preferences</div>
</footer>
</body>
</html>
